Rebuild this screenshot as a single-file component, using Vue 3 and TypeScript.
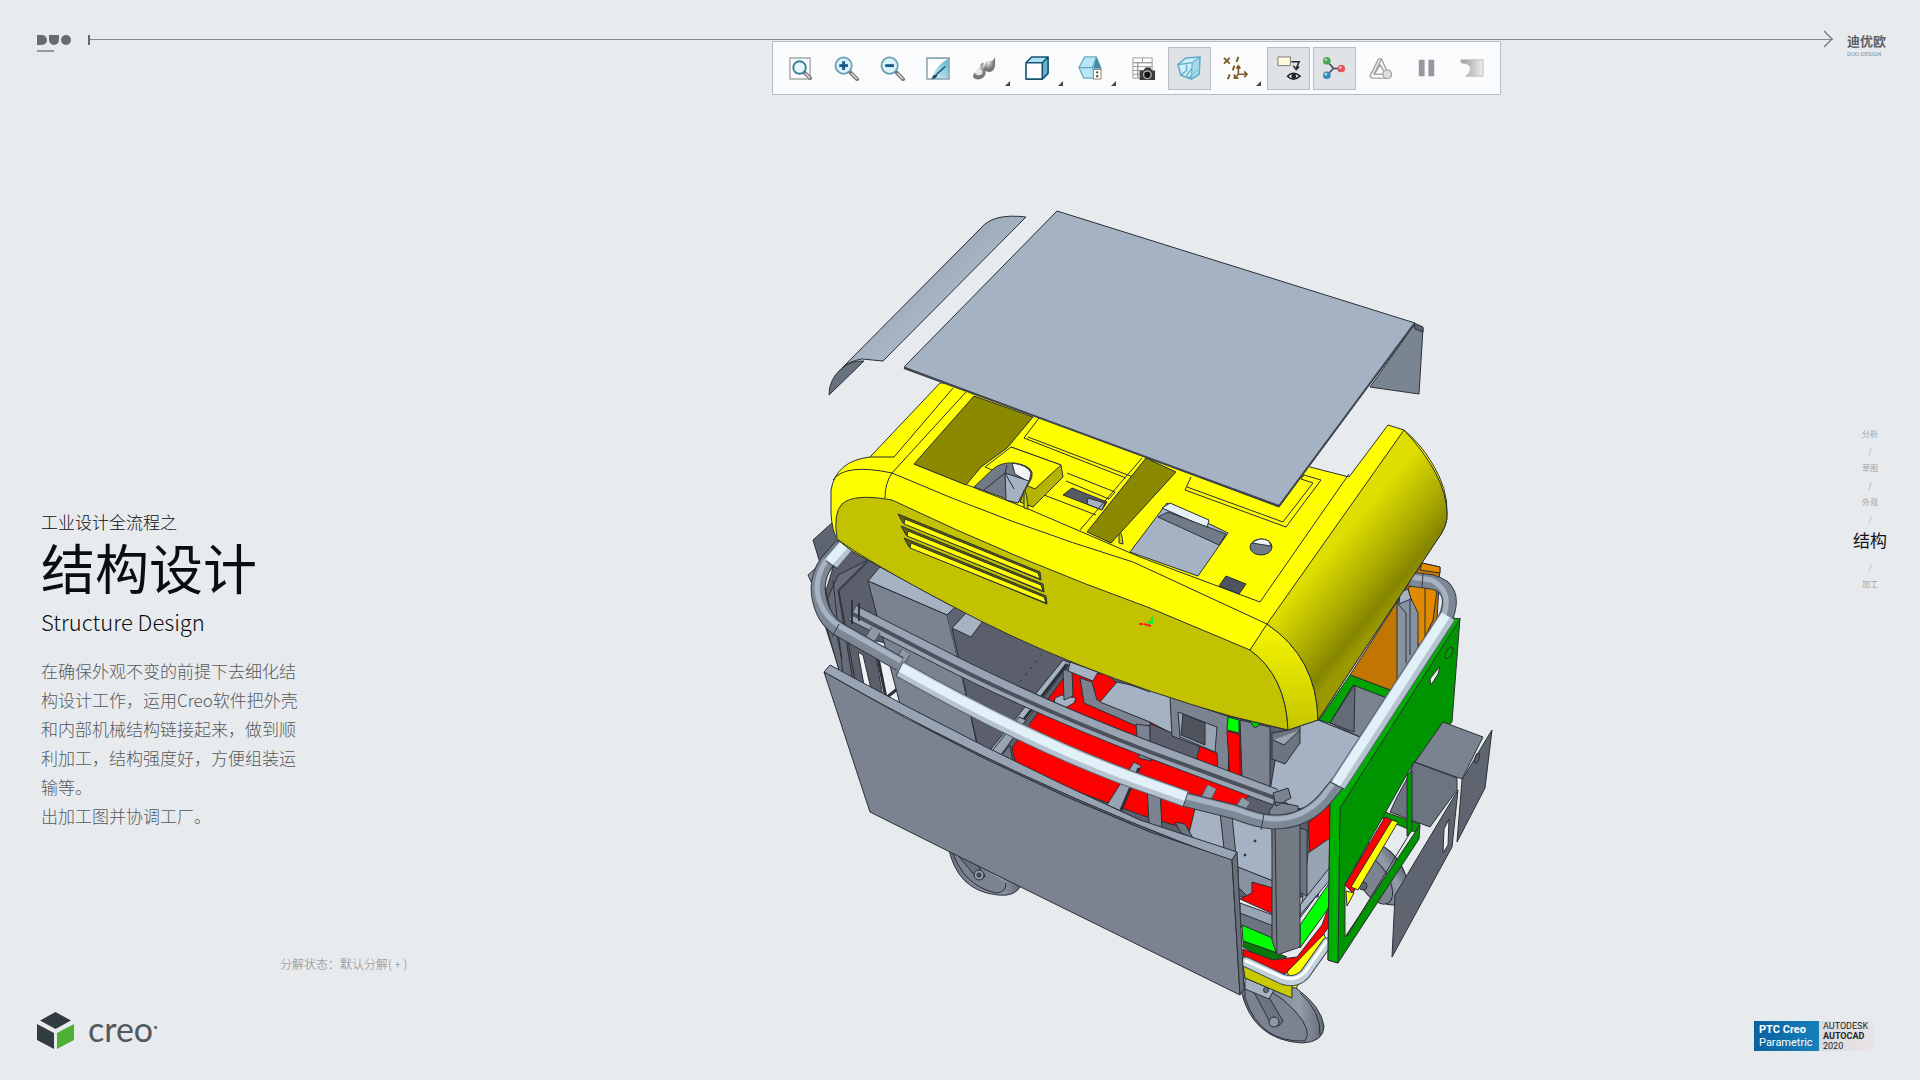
<script setup lang="ts">
interface Tool {
  id: string
  label: string
  menu?: boolean
  active?: boolean
}

interface Step {
  label: string
  current?: boolean
}

const tools: Tool[] = [
  { id: 'refit', label: '重新调整' },
  { id: 'zoom-in', label: '放大' },
  { id: 'zoom-out', label: '缩小' },
  { id: 'repaint', label: '重画' },
  { id: 'render', label: '渲染选项', menu: true },
  { id: 'style', label: '显示样式', menu: true },
  { id: 'views', label: '已保存方向', menu: true },
  { id: 'manager', label: '视图管理器' },
  { id: 'perspective', label: '透视图', active: true },
  { id: 'datum', label: '基准显示过滤器', menu: true },
  { id: 'notes', label: '注释显示', active: true },
  { id: 'spin', label: '旋转中心', active: true },
  { id: 'simulate', label: '仿真' },
  { id: 'pause', label: '暂停' },
  { id: 'results', label: '结果' },
]

const steps: Step[] = [
  { label: '分析' },
  { label: '草图' },
  { label: '外观' },
  { label: '结构', current: true },
  { label: '加工' },
]
</script>

<template>
  <div class="page" lang="zh-CN">
    <header class="header">
      <svg class="duo" viewBox="0 0 34 18" role="img" aria-label="DUO">
        <path d="M0 0h5a5 5 0 0 1 0 10H0zM12 0h10v5a5 5 0 0 1-10 0z" fill="#686c70" />
        <circle cx="29" cy="5" r="5" fill="#686c70" />
        <path d="M0 16h17" stroke="#95999d" stroke-width="2" />
      </svg>
      <div class="rail">
        <div class="line">
          <svg class="arrow" viewBox="0 0 10 18" aria-hidden="true">
            <path d="M1 1l8 8-8 8" fill="none" stroke="#74797d" stroke-width="1.4" />
          </svg>
        </div>
        <div class="tool-row">
          <div class="toolbar" role="toolbar" aria-label="图形工具栏">
            <button
              v-for="tool in tools"
              :key="tool.id"
              type="button"
              class="tool"
              :class="{ menu: tool.menu, active: tool.active }"
              :aria-label="tool.label"
              :aria-pressed="tool.active ? 'true' : undefined"
            >
              <svg class="icon" viewBox="0 0 26 26" aria-hidden="true" fill="none">
                <template v-if="tool.id === 'refit'">
                  <path d="M2 2h21v22H2z" fill="#fafbfd" stroke="#aaa8b0" stroke-width="1.5" />
                  <path d="M17 17l6 6" stroke="#777" stroke-width="4" stroke-linecap="round" />
                  <path d="M18 18l5 5" stroke="#ddd" stroke-width="1.5" />
                  <circle cx="12" cy="12" r="6.5" fill="#e9f8ff" stroke="#3d8198" stroke-width="2" />
                </template>
                <template v-else-if="tool.id === 'zoom-in' || tool.id === 'zoom-out'">
                  <path d="M16 16l8 8" stroke="#777" stroke-width="4" stroke-linecap="round" />
                  <path d="M18 18l6 6" stroke="#e2dcda" stroke-width="1.5" />
                  <circle cx="10" cy="10" r="8.5" fill="#d9f2fc" stroke="#6a9db1" stroke-width="1.8" />
                  <path d="M5.500 10h9" stroke="#155b84" stroke-width="3" />
                  <path v-if="tool.id === 'zoom-in'" d="M10 5.500v9" stroke="#155b84" stroke-width="3" />
                </template>
                <template v-else-if="tool.id === 'repaint'">
                  <path d="M1 2h23v22H1z" fill="url(#sky)" stroke="#8ea2ac" stroke-width="1.5" />
                  <path d="M2 3h21C15 7 8 15 6 23H2z" fill="#fff" />
                  <path d="M7 23q1-3 4-3l-1 2zM11 19l9-8" fill="#174d61" stroke="#174d61" stroke-width="1.5" />
                </template>
                <template v-else-if="tool.id === 'render'">
                  <path d="M24 1q-2 5-6 4-5 0-5 6l-1 4 6 2q6-2 6-8z" fill="url(#steel)" />
                  <path d="M12 7q-4 0-4 5-6 3-7 10 5 5 11 0 3-3 2-6-3-3-2-9z" fill="url(#steel)" />
                  <ellipse cx="7" cy="17" rx="4" ry="3" fill="#fff" opacity=".7" />
                </template>
                <template v-else-if="tool.id === 'style'">
                  <path d="M1 7l6-6h17l-6 6z" fill="#a9e0f3" />
                  <path d="M18 7l6-6v17l-6 6z" fill="#67b4d2" />
                  <path d="M1 7h17v17H1z" fill="#fff" />
                  <path d="M1 7l6-6h17v17l-6 6H1zh17l6-6M18 7v17" stroke="#175273" stroke-width="1.7" stroke-linejoin="round" />
                </template>
                <template v-else-if="tool.id === 'views'">
                  <path d="M7 1h12l5 12-5 10H6L1 12z" fill="#b7e6f5" stroke="#68a9c1" stroke-width="1.3" />
                  <path d="M19 1l5 12h-8z" fill="#4788a7" />
                  <path d="M1 12h14l4-11M15 12l4 11" stroke="#68a9c1" stroke-width="1.3" />
                  <path d="M16 14h8v10h-8z" fill="#fffdf6" stroke="#8b8175" />
                  <path d="M19 17h2M19 21h2" stroke="#333" stroke-width="2" />
                </template>
                <template v-else-if="tool.id === 'manager'">
                  <path d="M2 2h20v5H2zM2 7h5v16H2zM7 7h15v16H7z" fill="#fff" stroke="#9b9b9b" />
                  <path d="M2 11h20M2 15h20M2 19h20M12 2v5" stroke="#9b9b9b" />
                  <path d="M9 15h4l2-3h5l2 3h3v10H9z" fill="#393b3d" />
                  <circle cx="17" cy="19.500" r="4" fill="#111" stroke="#aaa" stroke-width="1.5" />
                </template>
                <template v-else-if="tool.id === 'perspective'">
                  <path d="M1 9l8-7 15-1-1 18-8 5-11-4z" fill="#cdedf8" stroke="#5eabc7" stroke-width="1.6" />
                  <path d="M1 9l15-2 8-6M16 7l-1 17M4 20l6-5v-6M9 22l6-9M12 23l10-9" stroke="#5eabc7" stroke-width="1.4" />
                  <path d="M16 7l7-5-1 17-7 4z" fill="#90d0e6" opacity=".7" />
                </template>
                <template v-else-if="tool.id === 'datum'">
                  <path d="M1 2l6 6M7 2L1 8M16 1l-2 5M12 10l-2 5M7 19l-2 5" stroke="#7d5a27" stroke-width="2" />
                  <path d="M16 11v8h9M16 19l-4 4M14 13l2-3 2 3M22 16l3 3-3 3M12 19v4h4" stroke="#7d5a27" stroke-width="1.7" />
                </template>
                <template v-else-if="tool.id === 'notes'">
                  <path d="M2 1h13v9H2z" fill="#fffbdc" stroke="#777" />
                  <path d="M16 6h8l-3 7M18 10l3 4 3-3" stroke="#26282a" stroke-width="1.6" />
                  <path d="M12 21q6-6 13 0-7 6-13 0z" fill="#fff" stroke="#222" stroke-width="1.6" />
                  <circle cx="18.500" cy="21" r="2.500" fill="#222" />
                </template>
                <template v-else-if="tool.id === 'spin'">
                  <path d="M5 5l7 8h8M12 13l-7 7" stroke="#3b4b51" stroke-width="1.7" />
                  <circle cx="5" cy="5" r="4" fill="#4ca752" />
                  <circle cx="20" cy="13" r="4" fill="#df5560" />
                  <circle cx="5" cy="20" r="4" fill="#3c88b9" />
                  <circle cx="4" cy="4" r="1.500" fill="#a7dca6" />
                  <circle cx="19" cy="12" r="1.500" fill="#ffadb0" />
                  <circle cx="4" cy="19" r="1.500" fill="#9ed0ef" />
                </template>
                <template v-else-if="tool.id === 'simulate'">
                  <path d="M11 3h3l8 18-3 2H4l-2-2z" stroke="#a4a5a7" stroke-width="1.5" stroke-linejoin="round" />
                  <path d="M12.500 9l6 10h-12z" stroke="#a4a5a7" stroke-width="1.5" stroke-linejoin="round" />
                  <path d="M14 3l-8 16" stroke="#a4a5a7" stroke-width="1.5" />
                  <circle cx="20" cy="19" r="4.500" fill="#ddd" stroke="#a4a5a7" stroke-width="1.4" />
                </template>
                <template v-else-if="tool.id === 'pause'">
                  <path d="M5 4h6v17H5zM15 4h6v17h-6z" fill="#96989b" />
                </template>
                <template v-else>
                  <path d="M1 4h23v17H6q5-3 5-8T1 7z" fill="url(#fade)" stroke="#bebebe" />
                </template>
              </svg>
              <svg v-if="tool.menu" class="caret" viewBox="0 0 5 5" aria-hidden="true">
                <path d="M5 0v5H0z" fill="#44474b" />
              </svg>
            </button>
          </div>
        </div>
      </div>
      <div class="brand">
        <span class="brand-name">迪优欧</span>
        <span class="brand-sub">DUO DESIGN</span>
      </div>
    </header>

    <main class="main">
      <section class="left">
        <div class="intro">
          <p class="kicker">工业设计全流程之</p>
          <h1 class="title">结构设计</h1>
          <p class="english">Structure Design</p>
          <div class="body">
            <p>在确保外观不变的前提下去细化结构设计工作，运用Creo软件把外壳和内部机械结构链接起来，做到顺利加工，结构强度好，方便组装运输等。</p>
            <p>出加工图并协调工厂。</p>
          </div>
        </div>
        <p class="state">分解状态：默认分解( + )</p>
        <div class="creo">
          <svg class="cube" viewBox="0 0 37 38" aria-hidden="true">
            <path d="M18.500 0L34 8.500 18.500 17 3 8.500z" fill="#303c40" />
            <path d="M0 12l17 9v16L0 28z" fill="#303c40" />
            <path d="M37 12l-17 9v16l17-9z" fill="#4bb035" />
          </svg>
          <span class="creo-name">creo<sup>•</sup></span>
        </div>
      </section>

      <svg class="model" viewBox="790 190 720 870" role="img" aria-label="手推车分解视图">
        <defs>
          <linearGradient id="sky" x1="0" y1="1" x2="1" y2="0"><stop offset="0" stop-color="#eaf8fc" /><stop offset="1" stop-color="#55b0ce" /></linearGradient>
          <radialGradient id="steel" cx=".4" cy=".3"><stop offset="0" stop-color="#f5f5f5" /><stop offset="1" stop-color="#777" /></radialGradient>
          <linearGradient id="fade"><stop offset="0" stop-color="#999" /><stop offset="1" stop-color="#eee" /></linearGradient>
          <linearGradient id="side" gradientUnits="userSpaceOnUse" x1="1335" y1="545" x2="1400" y2="600"><stop offset="0" stop-color="#dede00" /><stop offset=".55" stop-color="#a8a800" /><stop offset=".85" stop-color="#858500" /><stop offset="1" stop-color="#9a9a00" /></linearGradient>
          <linearGradient id="corner" x1="0" y1="0" x2="0" y2="1"><stop offset="0" stop-color="#f6f600" /><stop offset="1" stop-color="#c5c500" /></linearGradient>
          <linearGradient id="strip" x1="0" y1="0" x2="1" y2="1"><stop offset=".3" stop-color="#98a5b5" /><stop offset=".6" stop-color="#aab7c8" /></linearGradient>
          <linearGradient id="tyre"><stop offset="0" stop-color="#68707b" /><stop offset=".7" stop-color="#929dab" /><stop offset="1" stop-color="#626973" /></linearGradient>
        </defs>

        <!-- wheels behind the body -->
        <g class="edge">
          <ellipse cx="1382" cy="874" rx="21" ry="34" transform="rotate(-32 1382 874)" fill="url(#tyre)" />
          <ellipse cx="1374" cy="880" rx="14" ry="27" transform="rotate(-32 1374 880)" fill="#7a838f" />
          <circle cx="1363" cy="886" r="4" fill="#5f6570" />
          <path d="M948 845q8 46 50 50 18 2 23-10l-20-25z" fill="url(#tyre)" />
          <path d="M951 848q12 38 45 45 10 0 10-10" fill="#7a838f" />
          <path d="M956 853l20 24q6 5 9-1l-12-18" fill="#68707b" />
          <circle cx="979" cy="875" r="5" fill="#8e99a7" /><circle cx="979" cy="875" r="2" fill="#4c525c" />
        </g>

        <!-- rear orange panel and post -->
        <g class="edge">
          <path d="M1350 675L1422 563l18 4-3 54-20 60-27 9z" fill="#c07600" />
          <path d="M1422 563l18 4v6l-20-3zM1408 587l30-4-5 37-14 30z" fill="#e18a00" />
          <path d="M1425 580v57" />
          <path d="M1397 603l10-13 11 23v40l-21 27z" fill="#8893a1" />
          <path d="M1397 603l9 10v50M1410 595v60" />
          <path d="M1400 592l8-3 3 10-12 5z" fill="#a5b2c4" />
        </g>

        <!-- interior -->
        <g class="edge">
          <path d="M833 522l-20 18 7 23 20-15z" fill="#5f6570" />
          <path d="M808 575l22-20 6 8-21 27z" fill="#8893a1" />
          <path d="M840 545l28 15 82 45 117 54 83 28 80 29 58 14 30-10 42 17-30 50v50l-12 60-80 0L990 766 842 678l-22-68z" fill="#5a5f6b" />
          <path d="M838 575l30-15-30 30 15 92-13-8-18-63z" fill="#666d79" />
          <path d="M868 562l-29 29 17 95M824 583l18 75M833 580l10 95" />
          <path d="M858 652l5 3 8 34-7-4z" fill="#f1f3f5" />
          <path d="M873 640l12 3 16 62-5 2-13-10z" fill="#eef1f4" />
          <path d="M874 638l12 60 11 5M886 698l15-12" stroke-width="3" />
          <path d="M880 567l75 40-8 8-79-34z" fill="#a5b2c4" />
          <path d="M868 581l79 34 13 53 18 81-76-37z" fill="#7a838f" />
          <path d="M947 615l8-8 14 7-17 14 26 120" fill="#5f6570" />
          <path d="M967 612l16 9-12 16-19-9z" fill="#a5b2c4" />
          <path d="M1047 648l-38 48" stroke-dasharray="3 5" />

          <path d="M1068 672l38 2 20 16 130 45 2 55-60 42-51-15-130-47-5-22z" fill="#f00" />
          <path d="M1010 745l-10 12 14 12z" fill="#6c7480" />
          <path d="M1063 660l7 3-75 98-8-7z" fill="#a5b2c4" />
          <path d="M1067 664l-73 94" stroke-width="3" />
          <path d="M1055 698l7-3 14 3-2 5-9 5-11-5z" fill="#a5b2c4" />
          <path d="M1063 670h9l1 26-9 4z" fill="#7a838f" />
          <path d="M1070 662l28 10-5 9-25-10z" fill="#a5b2c4" />
          <path d="M1080 678l12 4 5 18 53 22v10l-66-29z" fill="#7a838f" />
          <path d="M1117 682q-8 9-17 20l50 20 23 12 5-40-38-7z" fill="#a5b2c4" />
          <path d="M1128 684l22 8M1136 724l3 34 12 3-1-35z" fill="#7a838f" />
          <path d="M1150 724l50 20-6 28-44-16z" fill="#5a5f6b" />
          <path d="M1170 697l60 20-2 60-10-4-1-20-45-17z" fill="#7a838f" />
          <path d="M1178 712l39 15-2 25-35-15z" fill="#98a4b3" />
          <path d="M1183 714l22 9v22l-24-10z" fill="#4e535e" />
          <path d="M1228 717l11 3v13l-12-3z" fill="#0f0" />
          <path d="M1227 731l13 4v48l-10-4z" fill="#f00" />
          <path d="M1288 722l30-2 42 17-25 50q-15 22-40 22l-25-18 5-30z" fill="#a5b2c4" />
          <path d="M1240 720l30 7v60l-28-10z" fill="#7a838f" />
          <path d="M1250 721q5 12 10 2z" fill="#0c0" />
          <path d="M1272 733l16-3 12-4v17l-15 21-13-5z" fill="#6c7480" />
          <path d="M1273 740l11 5 16-15" fill="#98a4b3" />
        </g>

        <!-- lower frame -->
        <g class="edge">
          <path d="M1197 800l75 25 1 56-36-14-50-25z" fill="#a5b2c4" />
          <path d="M1147 787l13 5 2 36-13-4zM1220 812l12 4 4 40-12-7z" fill="#7a838f" />
          <path d="M1175 822l10 2 8 14-12-5z" fill="#6c7480" />
          <circle cx="1255" cy="841" r="1" fill="#2b2f36" /><circle cx="1245" cy="855" r="1" fill="#2b2f36" />
          <path d="M1238 867l35 14v10l-25 6-10-10z" fill="#8893a1" />
          <path d="M1252 882l21 6v26l-33-15 12-6z" fill="#f00" />
          <path d="M1240 903l33 12v23l-33-14z" fill="#98a4b3" />
          <path d="M1240 913l36 14v14l-36-14z" fill="#6c7480" />
          <path d="M1242 925l35 15v13l-34-12z" fill="#0f0" />
          <path d="M1243 941l34 12 10 4-18 4-26-14z" fill="#087808" />
          <path d="M1308 823l22-20v52l-20-1z" fill="#f00" />
          <path d="M1308 853l22-15v40l-30 40z" fill="#98a4b3" />
          <path d="M1299 828l8 2v66l-8-4z" fill="#6c7480" />
          <path d="M1300 915l30-35v-13l-30 38z" fill="#a5b2c4" />
          <path d="M1300 925l30-43v24l-30 42z" fill="#0f0" />
          <path d="M1243 949l30 11 24-3 25-32 8-22v22l-30 43-17 6-40-18z" fill="#f00" />
          <path d="M1243 964l49 21v13l-47-20z" fill="#c9c900" />
          <path d="M1287 972l37-38 3 9-27 37-8 18v-16z" fill="#ff0" />
          <path d="M1272 823l28-2v126l-23 8-5-15z" fill="#747a84" />
          <path d="M1277 953l-2-125" />
        </g>

        <!-- front wheel -->
        <g class="edge">
          <path d="M1241 990q0-11 13-6l42 4q25 18 28 38 0 16-22 17-50-3-61-53z" fill="url(#tyre)" />
          <path d="M1245 985q26 0 50 26 18 20 10 30-45 2-60-43z" fill="#7a838f" />
          <path d="M1300 993q21 18 20 42" />
          <path d="M1250 985l20 37q7 9 13-1l-19-32" fill="#6c7480" />
          <path d="M1245 978l29 12-5 9-24-10z" fill="#a5b2c4" />
          <circle cx="1274" cy="1022" r="5" fill="#8e99a7" /><circle cx="1266" cy="990" r="2.500" fill="#6c7480" />
          <path d="M1243 965l49 21v12l-47-20z" fill="#c9c900" />
        </g>
        <g fill="none" stroke-linecap="round">
          <path d="M1246 962l36 17q14 5 23-5l22-31" stroke="#454b55" stroke-width="11" />
          <path d="M1246 962l36 17q14 5 23-5l22-31" stroke="#c3d1dd" stroke-width="9" />
          <path d="M1246 961l36 16q14 5 23-5l21-30" stroke="#fff" stroke-width="3" />
        </g>

        <!-- inner rail -->
        <g fill="none">
          <path d="M853 613L930 652Q1030 704 1150 750L1275 797" stroke="#30343b" stroke-width="17" />
          <path d="M853 613L930 652Q1030 704 1150 750L1275 797" stroke="#98a4b3" stroke-width="15" />
          <path d="M853 614L930 654Q1030 706 1150 752L1275 798" stroke="#4c525c" stroke-width="4" />
          <path d="M852 600v24M859 603v18" stroke="#30343b" stroke-width="2" />
          <path d="M876 630l-9 14M906 652l-9 14M1212 787l-8 15M1246 800l-8 12" stroke="#4c525c" stroke-width="11" />
          <path d="M876 630l-9 14M906 652l-9 14M1212 787l-8 15M1246 800l-8 12" stroke="#8e99a7" stroke-width="9" />
        </g>
        <g class="edge">
          <path d="M1019 717l7 3-28 39-9-4zM1134 762l7 4-20 45-14-6z" fill="#98a4b3" />
          <path d="M1139 768l-18 42" stroke-width="3" />
          <path d="M1273 793l15-5 3 10-15 8zM1269 811l7-9 22 4v15l-27 5z" fill="#7a838f" />
        </g>

        <!-- front panel -->
        <g class="edge">
          <path d="M824 672l6-7q160 88 310 155l97 32-5 9q-210-76-408-189z" fill="#98a4b3" />
          <path d="M824 672q160 94 326 160l82 28 8 135-193-95-97-48-80-40z" fill="#7a838f" />
          <path d="M1232 860l5-8 7 137-4 6z" fill="#68707b" />
        </g>

        <!-- green end frame and electrical box -->
        <g class="edge">
          <path d="M1353 684l34 13-27 40-30-14z" fill="#7a838f" />
          <path d="M1355 684l-1 48-24-9z" fill="#646b77" />
          <path d="M1350 675l40 15-3 8-34-13-23 38-11-3z" fill="#00a400" />
          <path d="M1397 797l13-24 4-11 43 16v12l-27 37-40-15z" fill="#6c7480" />
          <path d="M1385 812l35 12-5 8-33-14z" fill="#009900" />
          <path d="M1385 817l7 3-39 73-8-8z" fill="#f00" />
          <path d="M1392 820l6 2-40 68-7-3z" fill="#ff0" />
          <path d="M1346 891l8 2-7 13z" fill="#ff0" />
          <path d="M1330 803l130-185-8 104-38 40-69 122v53l75-112-1 14-81 124-10-3z" fill="#009500" />
          <path d="M1330 803l123-185 7 1-120 189-2 155-10-3z" fill="#00b000" />
          <path d="M1407 775l5-5v61l-5 5z" fill="#009500" />
          <path d="M1410 833l-63 103" />
          <path d="M1440 666l-2 8-7 11-1-6z" fill="#eef1f4" />
          <ellipse cx="1449" cy="653" rx="3" ry="6" fill="#00a000" transform="rotate(30 1449 653)" />
          <path d="M1443 722l40 15-21 42-47-17z" fill="#7a838f" />
          <path d="M1492 730l-7 58-28 54 5-62 25-42z" fill="#5f6570" />
          <path d="M1458 790l-6 57-60 110 3-62z" fill="#5f6570" />
          <path d="M1449 819l-1 26-5 8 1-24z" fill="#eef1f4" />
          <ellipse cx="1477" cy="758" rx="2" ry="5" transform="rotate(20 1477 758)" />
        </g>

        <!-- handrail -->
        <g fill="none">
          <path d="M841 546L827 562Q814 580 820 602 825 621 840 630L900 664M1183 799L1235 812Q1260 822 1275 822 1304 822 1324 800L1338 783M1446 617Q1457 588 1432 582L1410 579" stroke="#363b43" stroke-width="15" />
          <path d="M841 546L827 562Q814 580 820 602 825 621 840 630L900 664M1183 799L1235 812Q1260 822 1275 822 1304 822 1324 800L1338 783M1446 617Q1457 588 1432 582L1410 579" stroke="#7d8896" stroke-width="13" />
          <path d="M839 545L826 561Q813 580 819 600 825 618 841 627L901 661M1183 796L1235 809Q1260 819 1275 819 1302 819 1322 798L1335 781M1444 615Q1452 590 1431 580L1410 577" stroke="#a7b3c2" stroke-width="5" />
          <path d="M900 669Q1040 748 1150 786L1186 799M1338 785L1448 616M848 543L831 563" stroke="#59616d" stroke-width="17" />
          <path d="M900 669Q1040 748 1150 786L1186 799M1338 785L1448 616M848 543L831 563" stroke="#b6c4d2" stroke-width="15" />
          <path d="M900 667Q1040 746 1150 784L1187 797M1336 784L1446 615M846 543L829 562" stroke="#e2f0f8" stroke-width="9" />
          <path d="M826 561l12 8M903 662l-7 14M1188 792l-5 15M1330 782l14 7M1264 814l-3 16M839 624l-7 13M1423 574l-1 14" stroke="#363b43" stroke-width="1" />
        </g>

        <!-- yellow housing -->
        <g class="edge">
          <path d="M940 383L870 457Q836 461 831 490v23q1 18 6 26 14 13 31 21l82 45 117 54 83 28 80 29 58 14 30-10L1437 540q11-14 10-27 1-24-15-50-12-20-28-33l-16-5-39 52-39-10L1190 380z" fill="#ff0" />
          <path d="M837 539q-4-26 5-35 12-11 50-4 130 62 258 108l100 42q36 26 38 80l-58-14q-160-46-280-111-80-42-113-66z" fill="#c3c200" />
          <path d="M1250 650l17-26q50 34 51 96l-30 10q-2-54-38-80z" fill="url(#corner)" />
          <path d="M1267 624L1404 430q42 45 43 83 1 13-10 27L1318 720q-1-62-51-96z" fill="url(#side)" />
          <path d="M833 480q12-17 59-7-7 10-7 25M892 473q120 52 241 89l134 62M966 392l-74 81M953 388l-59 69-24 0M914 464l112 44 114 49 120 45 89-128" />
          <path d="M974 396l59 21-26 31-26 19-15 18-52-21z" fill="#8b8900" />
          <path d="M1039 418l-15 20 102 40M1028 437l105 40M1067 473l48 19-6 7-43-18M1044 495l52 20M1026 508l31-32" />
          <path d="M1011 447l50 18 2 12-30 30-13-5 7-20z" fill="#b4b300" />
          <path d="M1011 447l50 18-26 24-50-22z" fill="#ff0" />
          <path d="M974 487l18-17q8-8 22-7 15 2 18 9 1 6-3 11l-11 20z" fill="#717b88" />
          <path d="M1012 463q16 2 19 10l-2 9-14-8z" fill="#f1f3f5" />
          <path d="M1005 473l24 8-11 22-12-3z" fill="#a5b2c4" />
          <path d="M1007 465l-2 8 9 16M1005 473l-21 17" />
          <path d="M1024 508v-18q3 2 4 19zM1119 543v-12q3 1 4 13z" fill="#d0d000" />
          <path d="M1072 488l35 14-5 8-39-15z" fill="#555a64" />
          <path d="M1088 498l17 5-3 7-15-6z" fill="#a5b2c4" />
          <path d="M1146 458l30 14-65 71-24-11z" fill="#8b8900" />
          <path d="M1142 458l-62 72" />
          <path d="M1191 477l-6 13 101 37 35-47-17-5-3 4 12 4-30 39-96-35" />
          <path d="M1167 503l61 30-30 43-68-24z" fill="#a5b2c4" />
          <path d="M1162 508l8-5 39 17-2 8z" fill="#e5f0f5" />
          <path d="M1158 517l10-5 58 22-7 11z" fill="#717b88" />
          <ellipse cx="1261" cy="547" rx="11" ry="8" fill="#717b88" />
          <path d="M1252 543q8-7 17-2l2 5z" fill="#f4f6f8" />
          <path d="M1226 576l20 8-7 10-20-8z" fill="#4e535e" />
          <g v-for="slot in 3" :key="slot" :transform="`translate(${(slot - 1) * 3} ${(slot - 1) * 12})`">
            <path d="M898 514l142 58 1 8-138-57z" fill="#626200" />
            <path d="M905 519l133 54 2 6-136-55z" fill="#ff0" />
          </g>
        </g>
        <path d="M1139 624h4M1144 624l7 2" stroke="#f22" stroke-width="2" />
        <path d="M1152 617v7M1148 623l4-2" stroke="#0e4" stroke-width="2" />

        <!-- roof sheets -->
        <g class="edge">
          <path d="M981 228q12-15 45-11L883 361l-21-2q-13 2-20 9z" fill="url(#strip)" />
          <path d="M829 395q0-15 11-25 10-10 24-9z" fill="#68727e" />
          <path d="M1414 325l9 3-4 66-49-7z" fill="#7a8592" />
          <path d="M1414 323l9 4v5l-8-3z" fill="#5b6470" />
          <path d="M1057 211l358 112-136 184L904 367z" fill="#a5b2c4" />
          <path d="M904 368l375 138 135-182" stroke="#3f464f" stroke-width="2" />
        </g>
      </svg>

      <aside class="right">
        <nav class="steps" aria-label="流程">
          <ol>
            <li v-for="step in steps" :key="step.label" :class="{ current: step.current }">
              <a href="#" :aria-current="step.current ? 'step' : undefined">{{ step.label }}</a>
            </li>
          </ol>
        </nav>
        <div class="badges">
          <p class="ptc"><strong>PTC Creo</strong><span>Parametric</span></p>
          <p class="cad"><span>AUTODESK</span><strong>AUTOCAD</strong><span>2020</span></p>
        </div>
      </aside>
    </main>
  </div>
</template>

<style>
body {
  margin: 0;
  background: #e8ebee;
}
</style>

<style scoped>
.page {
  display: flex;
  flex-direction: column;
  min-height: 100vh;
  background: #e8ebee;
  color: #0b0d10;
  font-family: "Noto Sans CJK SC", "Noto Sans", sans-serif;
}
.page p,
.page h1,
.page ol {
  margin: 0;
  padding: 0;
}

.header {
  display: flex;
  align-items: flex-start;
  padding: 35px 32px 0 37px;
}
.duo {
  width: 34px;
  height: 18px;
}
.rail {
  flex: 1;
  margin: 0 14px 0 17px;
}
.line {
  position: relative;
  height: 4px;
  border-bottom: 1px solid #858a8e;
}
.line::before {
  content: "";
  position: absolute;
  left: 0;
  top: 0;
  width: 2px;
  height: 10px;
  background: #666a6e;
}
.arrow {
  position: absolute;
  right: 0;
  top: -5px;
  width: 10px;
  height: 18px;
}
.tool-row {
  display: grid;
  grid-template-columns: 686fr auto 333fr;
  padding-top: 1px;
}
.toolbar {
  grid-column: 2;
  display: flex;
  gap: 3px;
  padding: 5px 6px 4px;
  border: 1px solid #b7bcc2;
  background: #fafbfd;
}
.tool {
  position: relative;
  width: 43px;
  height: 43px;
  padding: 0 8px;
  border: 1px solid transparent;
  background: none;
}
.tool.menu {
  width: 50px;
  padding-right: 15px;
}
.tool.active {
  border-color: #b9bec2;
  background: #dfe3e6;
}
.icon {
  display: block;
  width: 25px;
  height: 25px;
}
.caret {
  position: absolute;
  right: 2px;
  bottom: 3px;
  width: 5px;
  height: 5px;
}
.brand {
  display: flex;
  flex-direction: column;
  width: 41px;
  margin-top: -4px;
  color: #5e6266;
  white-space: nowrap;
}
.brand-name {
  font-size: 13px;
  font-weight: 700;
  line-height: 19px;
}
.brand-sub {
  font-family: Roboto, sans-serif;
  font-size: 6px;
  line-height: 8px;
  color: #8b8f93;
}

.main {
  flex: 1;
  display: grid;
  grid-template-columns: 790fr 720fr 410fr;
}
.model {
  width: 100%;
  margin-top: 95px;
}
.edge {
  fill: none;
  stroke: #2b2f36;
  stroke-width: 1;
  stroke-linejoin: round;
}

.left {
  display: flex;
  flex-direction: column;
  justify-content: flex-end;
  padding: 0 0 30px 41px;
}
.kicker {
  font-size: 17px;
  line-height: 24px;
  font-weight: 300;
}
.title {
  font-size: 54px;
  line-height: 66px;
  font-weight: 400;
}
.english {
  font-size: 22px;
  line-height: 42px;
  font-weight: 300;
}
.body {
  width: 264px;
  margin-top: 14px;
  font-size: 17px;
  line-height: 29px;
  font-weight: 300;
  color: #55595d;
}
.state {
  margin-top: 126px !important;
  padding-left: 239px !important;
  font-size: 12px;
  line-height: 16px;
  font-weight: 300;
  color: #85898d;
}
.creo {
  display: flex;
  align-items: center;
  gap: 14px;
  margin: 40px 0 0 -4px;
}
.cube {
  width: 37px;
  height: 38px;
}
.creo-name {
  font-family: Lato, sans-serif;
  font-size: 34px;
  line-height: 34px;
  padding-bottom: 4px;
  color: #53595d;
}
.creo-name sup {
  font-size: 8px;
  line-height: 8px;
  vertical-align: 12px;
}

.right {
  display: flex;
  flex-direction: column;
  justify-content: space-between;
  align-items: flex-end;
  padding: 330px 31px 29px 0;
}
.steps ol {
  width: 38px;
  list-style: none;
  text-align: center;
  font-size: 8px;
  line-height: 17px;
  color: #a0a4a8;
}
.steps li:not(:last-child)::after {
  content: "/";
  display: block;
}
.steps a {
  display: block;
  color: inherit;
  text-decoration: none;
}
.steps .current a {
  margin-bottom: 6px;
  font-size: 17px;
  line-height: 25px;
  color: #101214;
}
.badges {
  display: flex;
  height: 30px;
  margin-right: 16px;
  font-family: Roboto, sans-serif;
}
.badges span,
.badges strong {
  display: block;
}
.ptc {
  box-sizing: border-box;
  width: 65px;
  padding: 2px 5px !important;
  background: linear-gradient(100deg, #0c5f9d, #1682bd);
  color: #fff;
  font-size: 11px;
  line-height: 13px;
}
.cad {
  box-sizing: border-box;
  width: 54px;
  padding: 0 4px !important;
  background: linear-gradient(90deg, #dadbde, #e8e4e6);
  color: #24272a;
  font-size: 9px;
  line-height: 10px;
}
</style>
